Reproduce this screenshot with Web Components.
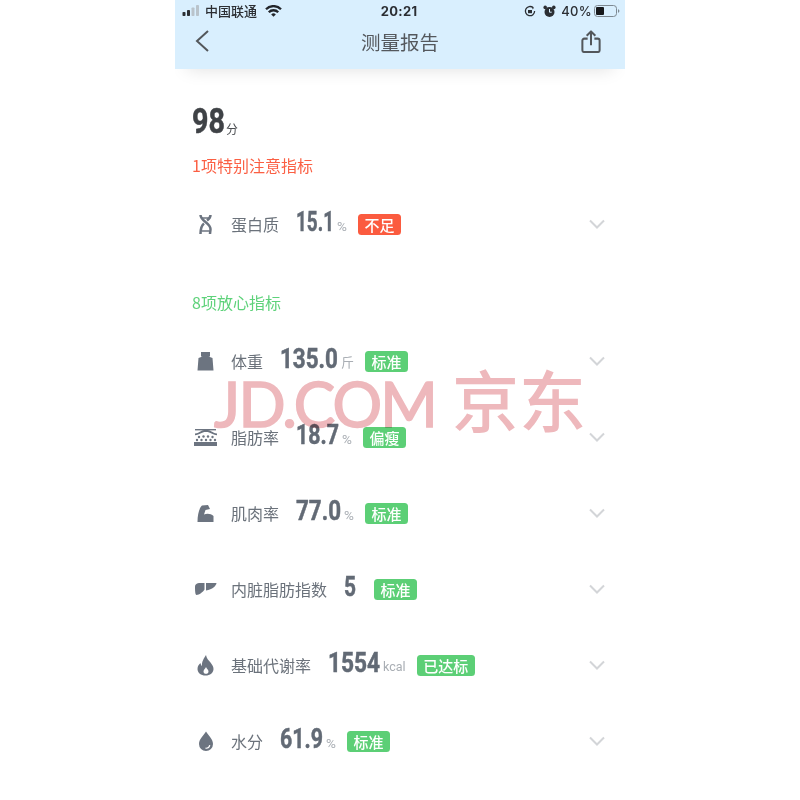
<!DOCTYPE html>
<html lang="zh">
<head>
<meta charset="utf-8">
<title>测量报告</title>
<style>
html,body{margin:0;padding:0;background:#fff}
body{font-family:"Noto Sans CJK SC","Noto Sans",sans-serif}
</style>
</head>
<body>
<report-page>
  <status-bar slot="top"></status-bar>
  <nav-bar slot="top" title="测量报告"></nav-bar>
  <score-head value="98" unit="分"></score-head>
  <section-title color="#fb5f43">1项特别注意指标</section-title>
  <metric-row icon="dna" label="蛋白质" value="15.1" vw="38" unit="%" tag="不足" tone="warn"></metric-row>
  <section-title color="#5ed27a" class="second">8项放心指标</section-title>
  <metric-row icon="weight" label="体重" value="135.0" vw="58" unit="斤" tag="标准"></metric-row>
  <metric-row icon="fat" label="脂肪率" value="18.7" vw="43" unit="%" tag="偏瘦"></metric-row>
  <metric-row icon="muscle" label="肌肉率" value="77.0" vw="45" unit="%" tag="标准"></metric-row>
  <metric-row icon="liver" label="内脏脂肪指数" value="5" vw="12" tag="标准"></metric-row>
  <metric-row icon="flame" label="基础代谢率" value="1554" vw="52" unit="kcal" tag="已达标"></metric-row>
  <metric-row icon="drop" label="水分" value="61.9" vw="43" unit="%" tag="标准"></metric-row>
  <jd-watermark slot="over"></jd-watermark>
</report-page>

<script>
const CJK = '"Noto Sans CJK SC","Noto Sans",sans-serif';
const NUM = 'Roboto,"Liberation Sans",sans-serif';

/* fit a bold number into the narrow width it takes in the design */
class FitNum extends HTMLElement{
  constructor(){super();this.attachShadow({mode:'open'}).innerHTML=`
  <style>
    :host{display:block;flex:none;width:${this.getAttribute('w')}px;white-space:nowrap;-webkit-text-stroke:.5px currentColor}
    span{display:inline-block;transform-origin:0 50%}
  </style><span><slot></slot></span>`}
  connectedCallback(){
    const s=this.shadowRoot.querySelector('span');
    const w=+this.getAttribute('w');
    const n=s.getBoundingClientRect().width;
    if(n>0)s.style.transform=`scaleX(${w/n})`;
  }
}
class ReportPage extends HTMLElement{
  constructor(){super();this.attachShadow({mode:'open'}).innerHTML=`
  <style>
    :host{display:block;position:relative;width:450px;height:800px;margin:0 auto;overflow:hidden;background:#fff}
    .top{position:relative;z-index:1;height:69px;background:#d9effe;box-shadow:0 12px 18px -12px rgba(0,0,0,.13)}
    .body{padding:38px 0 0 0}
  </style>
  <div class="top"><slot name="top"></slot></div>
  <div class="body"><slot></slot></div>
  <slot name="over"></slot>`}
}
class StatusBar extends HTMLElement{
  constructor(){super();this.attachShadow({mode:'open'}).innerHTML=`
  <style>
    :host{display:grid;grid-template-columns:1fr auto 1fr;align-items:center;height:22px;padding:0 5px 0 7px;color:#2b2e33}
    .l,.r{display:flex;align-items:center}
    .l{gap:5px}
    .carrier{font:500 13px/22px ${CJK}}
    .time{font:700 13px/22px Inter,sans-serif;letter-spacing:.3px;transform:translateX(-2px)}
    .r{justify-content:flex-end}
    .pct{font:500 13px/22px Inter,sans-serif;margin:0 2px 0 5px;letter-spacing:.3px}
    svg{display:block}
  </style>
  <div class="l">
    <svg width="18" height="12" viewBox="0 0 18 12"><rect x="0.500" y="7" width="3" height="4" rx=".8" fill="#2b2e33"/><rect x="5" y="5" width="3" height="6" rx=".8" fill="#2b2e33"/><rect x="9.500" y="2.500" width="3" height="8.500" rx=".8" fill="#b9c3cb"/><rect x="14" y="0" width="3" height="11" rx=".8" fill="#b9c3cb"/></svg>
    <span class="carrier">中国联通</span>
    <svg width="17" height="12" viewBox="0 0 17 12" style="margin-left:3px" fill="none" stroke="#22252a" stroke-width="2.300"><path d="M1 4.200a10.600 10.600 0 0 1 15 0"/><path d="M3.800 7.200a6.600 6.600 0 0 1 9.400 0"/><path d="M8.500 11.800 6.200 9.400a3.200 3.200 0 0 1 4.600 0z" fill="#22252a" stroke="none"/></svg>
  </div>
  <div class="time">20:21</div>
  <div class="r">
    <svg width="12" height="12" viewBox="0 0 12 12" fill="none" stroke="#2b2e33" stroke-width="1.300"><path d="M10.600 6A4.600 4.600 0 1 1 9 2.600"/><path d="M8 1.600 10 2.800 8.600 4.600z" fill="#2b2e33" stroke="none"/><rect x="4" y="5" width="4" height="3.200" fill="#2b2e33" stroke="none"/></svg>
    <svg width="13" height="13" viewBox="0 0 13 13" style="margin-left:7px"><circle cx="6.500" cy="7" r="5" fill="#2b2e33"/><circle cx="2.200" cy="2.400" r="1.800" fill="#2b2e33"/><circle cx="10.800" cy="2.400" r="1.800" fill="#2b2e33"/><path d="M6.500 4v3.200h2.200" stroke="#d9effe" stroke-width="1" fill="none"/></svg>
    <span class="pct">40%</span>
    <svg width="26" height="12" viewBox="0 0 26 12"><rect x=".5" y=".5" width="22" height="11" rx="3" fill="none" stroke="#7d8891"/><rect x="2" y="2" width="8" height="8" rx="1" fill="#16181b"/><path d="M24 4.200c1 .3 1.400 1 1.400 1.800s-.4 1.500-1.400 1.800z" fill="#7d8891"/></svg>
  </div>`}
}
class NavBar extends HTMLElement{
  constructor(){super();this.attachShadow({mode:'open'}).innerHTML=`
  <style>
    :host{display:grid;grid-template-columns:1fr auto 1fr;align-items:center;height:47px;padding:0 24px 9px 20px;box-sizing:border-box;color:#4b4f54}
    h1{margin:0;font:400 19.500px/26px ${CJK};color:#54585d;transform:translate(2px,1px)}
    svg{display:block}
    svg:last-child{justify-self:end}
  </style>
  <svg width="14" height="22" viewBox="0 0 14 22" fill="none" stroke="#53575b" stroke-width="2"><path d="M13 1 2 11l11 10"/></svg>
  <h1>${this.getAttribute('title')}</h1>
  <svg width="20" height="23" viewBox="0 0 20 24" fill="none" stroke="#53575b" stroke-width="2.100" stroke-linejoin="round"><path d="M6.500 9H3a2 2 0 0 0-2 2v10a2 2 0 0 0 2 2h14a2 2 0 0 0 2-2V11a2 2 0 0 0-2-2h-3.500"/><path d="M10 16V1.500M5.500 6 10 1.500 14.500 6"/></svg>`}
}
class ScoreHead extends HTMLElement{
  constructor(){super();this.attachShadow({mode:'open'}).innerHTML=`
  <style>
    :host{display:flex;align-items:flex-start;height:47px;padding-left:17px;color:#3f4246}
    fit-num{font:700 35px/30px ${NUM}}
    span{font:400 12px/14px ${CJK};margin:15px 0 0 1px;color:#4a4d51}
  </style>
  <fit-num w="33">${this.getAttribute('value')}</fit-num><span>${this.getAttribute('unit')}</span>`}
}
class SectionTitle extends HTMLElement{
  constructor(){super();this.attachShadow({mode:'open'}).innerHTML=`
  <style>
    :host{display:block;padding-left:17px;height:22px;margin-bottom:10px;font:400 16px/22px ${CJK};color:${this.getAttribute('color')}}
    :host(.second){margin-top:29px}
  </style><slot></slot>`}
}
const ICONS={
  dna:`<g fill="none" stroke="#6c7480" stroke-width="2.500"><path d="M2.500 1c0 6 10 8 10 14 0 2-.5 3.500-.5 5"/><path d="M12.500 1c0 2.500-1.500 4-3.500 5.500M6 9.500C3.500 11.500 2.500 14 2.500 20"/><path d="M3.500 4h8M3.500 17h8" stroke-width="1.700"/></g>`,
  weight:`<path fill="#6c7480" d="M4 1h9v4.500h-1.500L15.500 7l1 12.500H.5L1.500 7l4-1.500H4z"/>`,
  fat:`<g fill="#6c7480"><path d="M1 5.500c5-.5 6-3.700 11-3.700s6 3.200 11 3.700v1.800c-5-.5-6-3.300-11-3.300S6 6.800 1 7.300z"/><rect x="1" y="1" width="21" height="1.400"/><rect x="0" y="14" width="23" height="4"/><circle cx="5" cy="9" r="1.200"/><circle cx="9.500" cy="8.500" r="1.200"/><circle cx="14" cy="8.500" r="1.200"/><circle cx="18.500" cy="9" r="1.200"/><circle cx="3" cy="12" r="1.200"/><circle cx="7.500" cy="12" r="1.200"/><circle cx="12" cy="12" r="1.200"/><circle cx="16.500" cy="12" r="1.200"/><circle cx="21" cy="12" r="1.200"/></g>`,
  muscle:`<path fill="#6c7480" d="M.5 18C.5 10 2.500 3.500 5 1.500l6-.5 2 4-4.500 1-1.500 4.500c3-1.500 7-1 9.500 1.500v6z"/>`,
  liver:`<g fill="#6c7480"><path d="M1 5c0-3 2-4 5-4h4.500v6.500C9 10 5 13 2.500 13 1.200 13 1 9 1 5z"/><path d="M12 1h10.500c-.5 3-4 6.500-10.500 7.500z"/></g>`,
  flame:`<path fill="#6c7480" fill-rule="evenodd" d="M9 0c.5 3.500 2.500 5 4.500 7.500 1.800 2.300 3 4 3 6.500 0 3.800-3.400 6.500-8 6.500S.5 17.800.5 14c0-2.800 1.300-4.500 3-6 .2 1.500.7 2.400 1.500 3C4.500 7 7 3 9 0zM9 12c-.3 1.600-2.500 2.400-2.500 4.500 0 1.500 1.100 2.300 2.500 2.300s2.500-.8 2.500-2.300c0-1.900-1.900-2.700-2.500-4.500z"/>`,
  drop:`<path fill="#6c7480" d="M8 .5c2.500 4 7 7.500 7 12.500a7 7 0 0 1-14 0C1 8 5.500 4.500 8 .5z"/><path fill="none" stroke="#fff" stroke-width="1.200" d="M7.500 17.200c2 .3 3.800-.8 4.300-3"/>`
};
const ICON_BOX={dna:[15,21],weight:[17,20],fat:[23,18],muscle:[17,19],liver:[23,14],flame:[17,21],drop:[16,20]};
class MetricRow extends HTMLElement{
  constructor(){super();
    const a=n=>this.getAttribute(n);
    const ic=a('icon'),[w,h]=ICON_BOX[ic];
    const unit=a('unit');
    const usz=unit==='%'?13.5:unit==='kcal'?12.5:13;
    this.attachShadow({mode:'open'}).innerHTML=`
  <style>
    :host{display:flex;align-items:center;height:76px;padding:0 20px 0 19px;color:#6c7480}
    .ic{width:23px;display:flex;justify-content:center;margin-right:14px;flex:none}
    svg{display:block}
    .label{font:400 16px/24px ${CJK};color:#6b727b;margin:0 17px 1px 0}
    fit-num{font:700 28px/30px ${NUM};color:#626a75;margin:0 3px 4px 0}
    fit-num.solo{margin-right:18px}
    .unit{font:400 ${usz}px/16px Roboto,${CJK};color:#a9aeb4;margin:3px 11px 0 0;}
    tag-badge{margin-top:1px}
    .sp{flex:1}
    .chev{flex:none}
  </style>
  <span class="ic"><svg width="${w}" height="${h}" viewBox="0 0 ${w} ${h}">${ICONS[ic]}</svg></span>
  <span class="label">${a('label')}</span>
  <fit-num w="${a('vw')}"${unit?'':' class="solo"'}>${a('value')}</fit-num>
  ${unit?`<span class="unit">${unit}</span>`:''}
  <tag-badge tone="${a('tone')||'ok'}">${a('tag')}</tag-badge>
  <span class="sp"></span>
  <svg class="chev" width="16" height="10" viewBox="0 0 16 10" fill="none" stroke="#d3d5d8" stroke-width="2"><path d="M1 1.500 8 8.500l7-7"/></svg>`}
}
class TagBadge extends HTMLElement{
  constructor(){super();
    const warn=this.getAttribute('tone')==='warn';
    this.attachShadow({mode:'open'}).innerHTML=`
  <style>
    :host{display:inline-block;flex:none;height:21px;padding:0 6.500px;border-radius:3.500px;background:${warn?'#fb5b3f':'#5ccf76'};color:#fff;font:500 15px/21px ${CJK};white-space:nowrap}
  </style><slot></slot>`}
}
class JdWatermark extends HTMLElement{
  constructor(){super();this.attachShadow({mode:'open'}).innerHTML=`
  <style>
    :host{position:absolute;left:39px;top:378px;display:flex;align-items:center;gap:16px;height:50px;color:#eeb8bc;mix-blend-mode:multiply;pointer-events:none;z-index:2}
    .en{font:400 62px/50px Lato,Roboto,sans-serif;letter-spacing:-1.800px;-webkit-text-stroke:1.600px #eeb8bc}
    .cn{font:500 67px/50px ${CJK};transform:translateY(-5px)}
  </style>
  <span class="en">JD.COM</span><span class="cn">京东</span>`}
}
customElements.define('fit-num',FitNum);
customElements.define('report-page',ReportPage);
customElements.define('status-bar',StatusBar);
customElements.define('nav-bar',NavBar);
customElements.define('score-head',ScoreHead);
customElements.define('section-title',SectionTitle);
customElements.define('tag-badge',TagBadge);
customElements.define('metric-row',MetricRow);
customElements.define('jd-watermark',JdWatermark);
</script>
</body>
</html>
